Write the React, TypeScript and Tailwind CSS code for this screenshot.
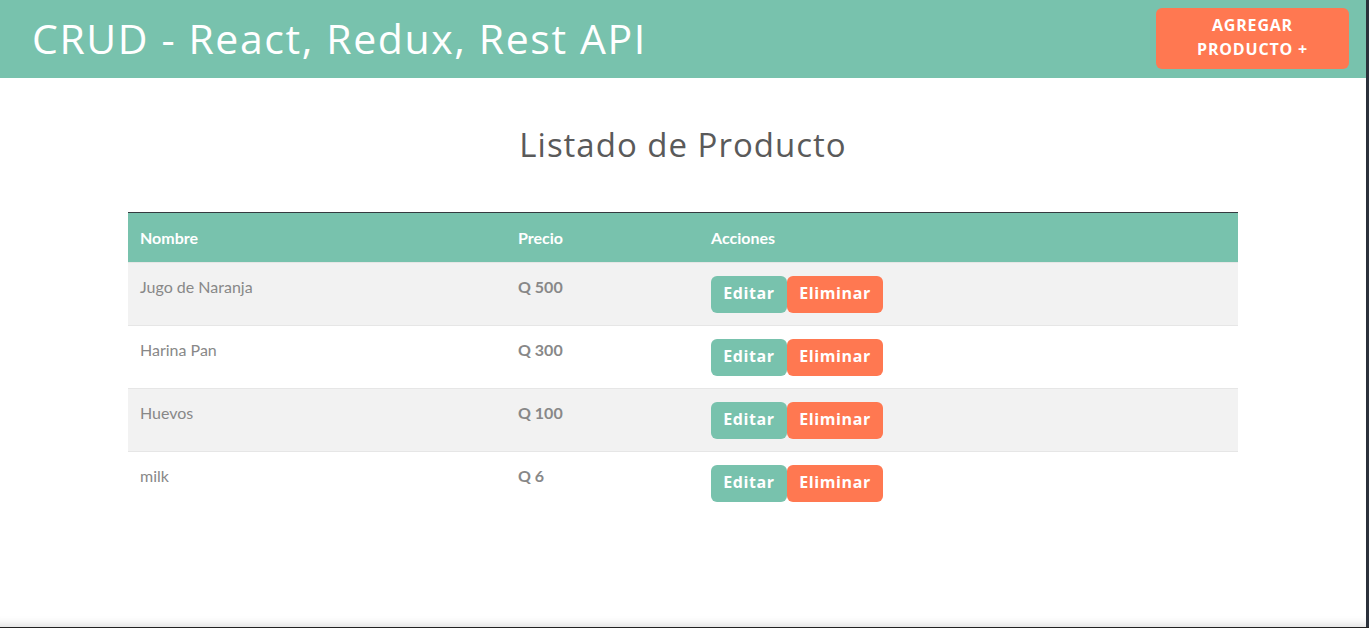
const productos = [
  { nombre: "Jugo de Naranja", precio: 500 },
  { nombre: "Harina Pan", precio: 300 },
  { nombre: "Huevos", precio: 100 },
  { nombre: "milk", precio: 6 },
];

const heading = { fontFamily: '"Open Sans", "Noto Sans", sans-serif' };
const body = { fontFamily: 'Lato, "Noto Sans", sans-serif' };

export default function App() {
  return (
    <div className="flex h-[628px] flex-col overflow-hidden bg-[#222]">
      <div className="flex flex-1">
        <main className="flex flex-1 flex-col bg-white shadow-[inset_0_-12px_10px_-10px_rgba(0,0,0,0.15)]">
          <header className="flex h-[78px] items-center justify-between bg-[#78c2ad] pl-8 pr-[17px]">
            <h1 className="text-[41px] font-normal tracking-[1.6px] text-white" style={heading}>
              CRUD - React, Redux, Rest API
            </h1>
            <button
              className="mb-[1px] h-[61px] w-[193px] rounded-md bg-[#ff7851] pb-[3px] text-[16px] font-bold uppercase leading-6 tracking-[0.8px] text-white"
              style={heading}
            >
              Agregar
              <br />
              Producto +
            </button>
          </header>

          <div className="mx-auto w-[1110px]">
            <h2
              className="mt-[47px] text-center text-[33px] font-normal leading-[40px] tracking-[1px] text-[#5a5a5a]"
              style={heading}
            >
              Listado de Producto
            </h2>

            <table className="mt-[47px] w-full border-collapse text-[16px]" style={body}>
              <thead>
                <tr className="h-[50px] border-t border-[#343a40] bg-[#78c2ad] text-left text-white">
                  <th className="w-[378px] px-3 font-bold">Nombre</th>
                  <th className="w-[193px] px-3 font-bold">Precio</th>
                  <th className="px-3 font-bold">Acciones</th>
                </tr>
              </thead>
              <tbody>
                {productos.map((p, i) => (
                  <tr
                    key={p.nombre}
                    className={`h-[63px] border-t border-[#e6e6e6] ${i % 2 === 0 ? "bg-[#f2f2f2]" : "bg-white"}`}
                  >
                    <td className="px-3 pt-[12px] align-top leading-[24px] text-[#888]">{p.nombre}</td>
                    <td className="px-3 pt-[12px] align-top font-bold leading-[24px] text-[#888]">
                      Q {p.precio}
                    </td>
                    <td className="px-3 align-middle">
                      <div className="flex" style={heading}>
                        <button className="h-[37px] w-[76px] rounded-md bg-[#78c2ad] pb-[2px] text-[16px] font-bold tracking-[0.6px] text-white">
                          Editar
                        </button>
                        <button className="h-[37px] w-[96px] rounded-md bg-[#ff7851] pb-[2px] text-[16px] font-bold tracking-[0.6px] text-white">
                          Eliminar
                        </button>
                      </div>
                    </td>
                  </tr>
                ))}
              </tbody>
            </table>
          </div>
        </main>
        <div className="w-[3px] bg-[#2b313b]" />
      </div>
      <div className="h-px bg-[#222]" />
    </div>
  );
}
